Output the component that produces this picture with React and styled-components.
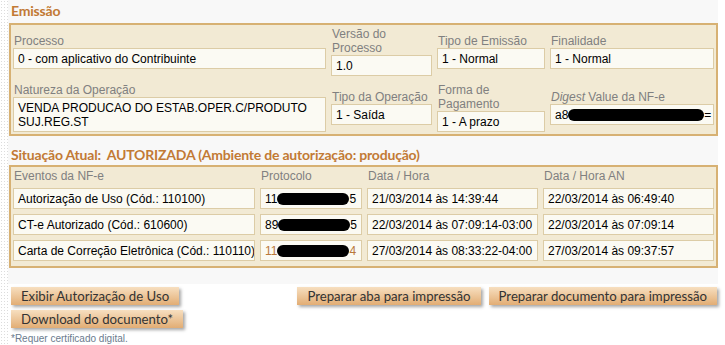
import React from 'react';
import styled, { createGlobalStyle } from 'styled-components';

const Global = createGlobalStyle`
  html, body {
    margin: 0;
    padding: 0;
    background: #ffffff;
  }
`;

const Page = styled.div`
  display: flex;
  min-height: 345px;
  overflow: hidden;
`;

// dotted strip on the left edge of the page
const DotStrip = styled.div`
  width: 8px;
  flex-shrink: 0;
  background-color: #ffffff;
  background-image: radial-gradient(#dcdcdc 0.8px, transparent 1px);
  background-size: 3px 3px;
`;

const Main = styled.div`
  width: 710px;
  display: flex;
  flex-direction: column;
`;

const Panel = styled.div`
  background: #f8f8f8;
  padding: 2px 0 16px 1px;
`;

const Title = styled.h2`
  margin: ${props => props.$first ? '0 0 3px 0' : '10px 0 1px 0'};
  padding-left: 2px;
  font-family: Lato, "DejaVu Sans", sans-serif;
  font-weight: 700;
  font-size: 14px;
  letter-spacing: -0.2px;
  line-height: 18px;
  color: #c27a35;
  white-space: pre;
`;

const Box = styled.div`
  border: 2px solid #d7b173;
  background: #f2ead4;
  padding: ${props => props.$pad || '2px'};
`;

const FormGrid = styled.div`
  display: grid;
  grid-template-columns: 313px 101px 108px 164px;
  column-gap: 5px;
  row-gap: 7px;
  align-items: center;
`;

const TableGrid = styled.div`
  display: grid;
  grid-template-columns: 242px 102px 171px 171px;
  column-gap: 5px;
  row-gap: 5px;
`;

const Cell = styled.div`
  display: flex;
  flex-direction: column;
`;

const Label = styled.div`
  font-family: "Liberation Sans", Arial, sans-serif;
  font-size: 12px;
  line-height: ${props => props.$lh || '14px'};
  color: #808080;
  padding-left: 1px;
`;

const Field = styled.div`
  background: #fbfaf3;
  border: 1px solid #dccca6;
  padding: 3px 2px 2px 4px;
  font-family: "Liberation Sans", Arial, sans-serif;
  font-size: 12px;
  line-height: 14px;
  color: ${props => props.$link ? '#b9783a' : '#000000'};
  white-space: ${props => props.$wrap ? 'normal' : 'nowrap'};
  overflow: hidden;
`;

const Redact = styled.span`
  display: inline-block;
  width: ${props => props.$w}px;
  height: 12px;
  background: #000;
  border-radius: 6px;
  vertical-align: -2px;
`;

const Buttons = styled.div`
  display: flex;
  justify-content: space-between;
  align-items: flex-start;
  padding: 3px 1px 0 3px;
`;

const ButtonCol = styled.div`
  display: flex;
  flex-direction: column;
  align-items: flex-start;
  gap: 5px;
`;

const ButtonRow = styled.div`
  display: flex;
  gap: 8px;
`;

const Button = styled.button`
  height: 18px;
  padding: 0 10px;
  border: none;
  border-radius: 0;
  background: linear-gradient(to bottom, #f7dfc0, #e2ad74);
  box-shadow: 2px 2px 3px rgba(0, 0, 0, 0.35);
  font-family: Lato, "DejaVu Sans", sans-serif;
  font-size: 13.2px;
  line-height: 18px;
  color: #333333;
  cursor: pointer;
  white-space: nowrap;
`;

const Note = styled.div`
  margin: 5px 0 0 3px;
  font-family: "Liberation Sans", Arial, sans-serif;
  font-size: 10px;
  line-height: 12px;
  color: #6b7b8e;
`;

const events = [
  { name: 'Autorização de Uso (Cód.: 110100)', a: '11', b: '5', w: 72, dh: '21/03/2014 às 14:39:44', an: '22/03/2014 às 06:49:40' },
  { name: 'CT-e Autorizado (Cód.: 610600)', a: '89', b: '5', w: 72, dh: '22/03/2014 às 07:09:14-03:00', an: '22/03/2014 às 07:09:14' },
  { name: 'Carta de Correção Eletrônica (Cód.: 110110)', a: '11', b: '4', w: 72, dh: '27/03/2014 às 08:33:22-04:00', an: '27/03/2014 às 09:37:57', link: true },
];

export default function App() {
  return (
    <Page>
      <Global />
      <DotStrip />
      <Main>
        <Panel>
          <Title $first>Emissão</Title>
          <Box $pad="2px 2px 2px">
            <FormGrid>
              <Cell>
                <Label>Processo</Label>
                <Field>0 - com aplicativo do Contribuinte</Field>
              </Cell>
              <Cell>
                <Label>Versão do<br />Processo</Label>
                <Field>1.0</Field>
              </Cell>
              <Cell>
                <Label>Tipo de Emissão</Label>
                <Field>1 - Normal</Field>
              </Cell>
              <Cell>
                <Label>Finalidade</Label>
                <Field>1 - Normal</Field>
              </Cell>

              <Cell>
                <Label>Natureza da Operação</Label>
                <Field $wrap>VENDA PRODUCAO DO ESTAB.OPER.C/PRODUTO SUJ.REG.ST</Field>
              </Cell>
              <Cell>
                <Label>Tipo da Operação</Label>
                <Field>1 - Saída</Field>
              </Cell>
              <Cell>
                <Label>Forma de<br />Pagamento</Label>
                <Field>1 - A prazo</Field>
              </Cell>
              <Cell>
                <Label><i>Digest</i> Value da NF-e</Label>
                <Field>a8<Redact $w={136} />=</Field>
              </Cell>
            </FormGrid>
          </Box>

          <Title>{'Situação Atual:  AUTORIZADA (Ambiente de autorização: produção)'}</Title>
          <Box $pad="3px 2px 5px">
            <TableGrid>
              <Label $lh="13px">Eventos da NF-e</Label>
              <Label $lh="13px">Protocolo</Label>
              <Label $lh="13px">Data / Hora</Label>
              <Label $lh="13px">Data / Hora AN</Label>
              {events.map((ev, i) => (
                <React.Fragment key={i}>
                  <Field>{ev.name}</Field>
                  <Field $link={ev.link}>{ev.a}<Redact $w={ev.w} />{ev.b}</Field>
                  <Field>{ev.dh}</Field>
                  <Field>{ev.an}</Field>
                </React.Fragment>
              ))}
            </TableGrid>
          </Box>
        </Panel>

        <Buttons>
          <ButtonCol>
            <Button>Exibir Autorização de Uso</Button>
            <Button>Download do documento*</Button>
          </ButtonCol>
          <ButtonRow>
            <Button>Preparar aba para impressão</Button>
            <Button>Preparar documento para impressão</Button>
          </ButtonRow>
        </Buttons>
        <Note>*Requer certificado digital.</Note>
      </Main>
    </Page>
  );
}
